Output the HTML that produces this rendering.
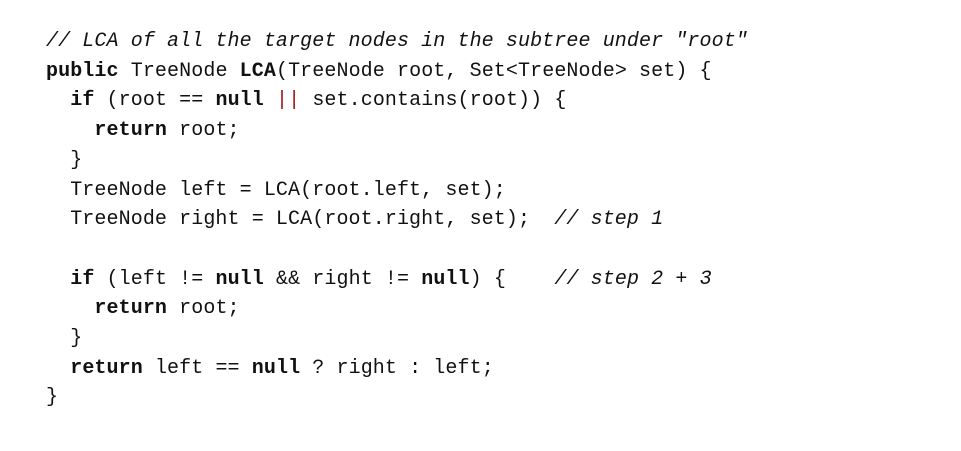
<!DOCTYPE html>
<html><head><style>
html,body{margin:0;background:#fff;width:961px;height:451px;overflow:hidden}
pre{position:absolute;left:46px;top:27px;margin:0;font-family:"Liberation Mono",monospace;font-size:20px;line-height:29.7px;color:#111;letter-spacing:0.1px}
b{font-weight:bold}
i{font-style:italic}
.r{color:#a31515}
</style></head><body>
<pre><i>// LCA of all the target nodes in the subtree under "root"</i>
<b>public</b> TreeNode <b>LCA</b>(TreeNode root, Set&lt;TreeNode&gt; set) {
  <b>if</b> (root == <b>null</b> <span class="r">||</span> set.contains(root)) {
    <b>return</b> root;
  }
  TreeNode left = LCA(root.left, set);
  TreeNode right = LCA(root.right, set);  <i>// step 1</i>

  <b>if</b> (left != <b>null</b> &amp;&amp; right != <b>null</b>) {    <i>// step 2 + 3</i>
    <b>return</b> root;
  }
  <b>return</b> left == <b>null</b> ? right : left;
}</pre>
</body></html>
